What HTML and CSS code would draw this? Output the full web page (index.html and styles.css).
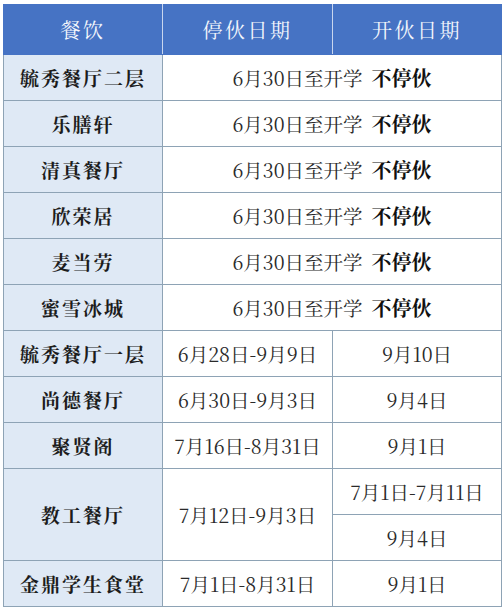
FILE: index.html
```html
<!DOCTYPE html>
<html lang="zh-CN">
<head>
<meta charset="utf-8">
<link rel="stylesheet" href="styles.css">
</head>
<body>
<table class="sched">
  <colgroup>
    <col class="c1"><col class="c2"><col class="c3">
  </colgroup>
  <thead>
    <tr class="head"><th>餐饮</th><th>停伙日期</th><th>开伙日期</th></tr>
  </thead>
  <tbody>
    <tr><td class="name">毓秀餐厅二层</td><td class="merged" colspan="2">6月30日至开学 <b>不停伙</b></td></tr>
    <tr><td class="name">乐膳轩</td><td class="merged" colspan="2">6月30日至开学 <b>不停伙</b></td></tr>
    <tr><td class="name">清真餐厅</td><td class="merged" colspan="2">6月30日至开学 <b>不停伙</b></td></tr>
    <tr><td class="name">欣荣居</td><td class="merged" colspan="2">6月30日至开学 <b>不停伙</b></td></tr>
    <tr><td class="name">麦当劳</td><td class="merged" colspan="2">6月30日至开学 <b>不停伙</b></td></tr>
    <tr><td class="name">蜜雪冰城</td><td class="merged" colspan="2">6月30日至开学 <b>不停伙</b></td></tr>
    <tr><td class="name">毓秀餐厅一层</td><td>6月28日-9月9日</td><td>9月10日</td></tr>
    <tr><td class="name">尚德餐厅</td><td>6月30日-9月3日</td><td>9月4日</td></tr>
    <tr><td class="name">聚贤阁</td><td>7月16日-8月31日</td><td>9月1日</td></tr>
    <tr><td class="name" rowspan="2">教工餐厅</td><td rowspan="2">7月12日-9月3日</td><td>7月1日-7月11日</td></tr>
    <tr><td>9月4日</td></tr>
    <tr><td class="name">金鼎学生食堂</td><td>7月1日-8月31日</td><td>9月1日</td></tr>
  </tbody>
</table>
</body>
</html>
```

FILE: styles.css
```css
html, body {
  background: #ffffff;
}
body {
  margin: 4px 0 0 3px;
  font-family: "Noto Serif CJK SC", "Liberation Serif", "Noto Sans CJK SC", serif;
}
.sched {
  border-collapse: collapse;
  table-layout: fixed;
  width: 498px;
}
.c1 { width: 159px; }
.c2 { width: 170px; }
.c3 { width: 169px; }
.sched th,
.sched td {
  border: 1px solid #8ea3b5;
  text-align: center;
  vertical-align: middle;
  padding: 0;
}
.head th {
  height: 49px;
  background: #4673c4;
  color: #f4f7fc;
  font-size: 20px;
  font-weight: normal;
  letter-spacing: 2.5px;
  border-color: #4673c4;
  border-left-color: #c9d6ee;
  border-right-color: #c9d6ee;
}
.head th:first-child { border-left-color: #4673c4; }
.head th:last-child { border-right-color: #4673c4; }
.sched td {
  height: 45px;
  font-size: 19.5px;
  color: #2a2a2a;
}
.sched td.name {
  background: #dfe9f5;
  color: #1c1c1c;
  font-weight: bold;
  font-size: 19px;
  letter-spacing: 2px;
}
.sched td.merged {
  font-size: 19.5px;
}
.sched td.merged b {
  font-size: 20px;
  color: #111;
  margin-left: 4px;
}
```
